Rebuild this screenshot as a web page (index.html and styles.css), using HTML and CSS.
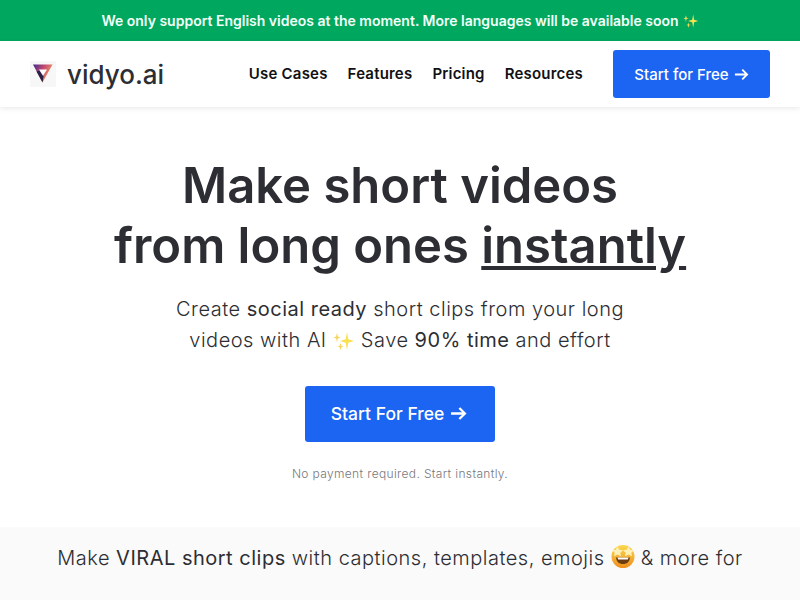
FILE: index.html
```html
<!DOCTYPE html>
<html lang="en">
<head>
    <meta charset="UTF-8">
    <meta name="viewport" content="width=device-width, initial-scale=1.0">
    <title>vidyo.ai</title>
    <link rel="stylesheet" href="styles.css">
</head>
<body>
    <div class="top-banner">
        We only support English videos at the moment. More languages will be available soon
        <svg class="sparkles sparkles-small" viewBox="0 0 22 22"><path d="M14 2 15.300 9.200 21 11 15.300 12.800 14 20 12.700 12.800 7 11 12.700 9.200Z" fill="#fbe14f"/><path d="M4 3 4.900 6.600 7.500 7.500 4.900 8.400 4 12 3.100 8.400 .5 7.500 3.100 6.600Z" fill="#f8d55a"/><path d="M7.500 13 8.300 15.700 10.500 16.500 8.300 17.300 7.500 20.500 6.700 17.300 4.500 16.500 6.700 15.700Z" fill="#f8d55a"/></svg>
    </div>

    <header class="navbar">
        <a class="brand" href="#">
            <span class="brand-icon">
                <svg viewBox="0 0 26 26" width="26" height="26">
                    <defs>
                        <linearGradient id="logoGrad" x1="0" y1="0" x2="1" y2="0.5">
                            <stop offset="0" stop-color="#3d2a8f"/>
                            <stop offset="0.5" stop-color="#c4476e"/>
                            <stop offset="1" stop-color="#f2a566"/>
                        </linearGradient>
                    </defs>
                    <path d="M3 3.500H22.500L12.500 21.500Z" fill="url(#logoGrad)"/>
                    <path d="M9 8.500H17L12.500 15.500Z" fill="#fff"/>
                    <path d="M12.500 21.500 6.500 10.500 9.500 9.500 13.500 15.500Z" fill="#2b2147"/>
                </svg>
            </span>
            <span class="brand-name">vidyo.ai</span>
        </a>
        <nav class="nav-links">
            <a href="#">Use Cases</a>
            <a href="#">Features</a>
            <a href="#">Pricing</a>
            <a href="#">Resources</a>
        </nav>
        <a class="btn btn-nav" href="#">Start for Free
            <svg class="arrow" viewBox="0 0 16 16" width="15" height="15"><path d="M1 8H14M8.800 2.800 14 8 8.800 13.200" fill="none" stroke="#fff" stroke-width="2"/></svg>
        </a>
    </header>

    <main class="hero">
        <h1>Make short videos<br>from long ones <u>instantly</u></h1>
        <p class="hero-sub">Create <span class="em">social ready</span> short clips from your long<br>videos with AI
            <svg class="sparkles" viewBox="0 0 22 22"><path d="M14 2 15.300 9.200 21 11 15.300 12.800 14 20 12.700 12.800 7 11 12.700 9.200Z" fill="#fbe14f"/><path d="M4 3 4.900 6.600 7.500 7.500 4.900 8.400 4 12 3.100 8.400 .5 7.500 3.100 6.600Z" fill="#f8d55a"/><path d="M7.500 13 8.300 15.700 10.500 16.500 8.300 17.300 7.500 20.500 6.700 17.300 4.500 16.500 6.700 15.700Z" fill="#f8d55a"/></svg>
            Save <span class="em">90% time</span> and effort</p>
        <a class="btn btn-hero" href="#">Start For Free
            <svg class="arrow" viewBox="0 0 16 16" width="17" height="17"><path d="M1 8H14M8.800 2.800 14 8 8.800 13.200" fill="none" stroke="#fff" stroke-width="2.200"/></svg>
        </a>
        <p class="hero-note">No payment required. Start instantly.</p>
    </main>

    <section class="viral-strip">
        <p>Make <span class="em">VIRAL short clips</span> with captions, templates, emojis
            <svg class="star-face" viewBox="0 0 24 24" width="24" height="24">
                <defs>
                    <linearGradient id="faceGrad" x1="0" y1="0" x2="0" y2="1">
                        <stop offset="0" stop-color="#fbd84f"/>
                        <stop offset="1" stop-color="#ee8f1c"/>
                    </linearGradient>
                </defs>
                <circle cx="12" cy="12.500" r="11.500" fill="url(#faceGrad)"/>
                <path d="M5 13.500H19C18.500 18 15.800 20 12 20S5.500 18 5 13.500Z" fill="#6b3d10"/>
                <path d="M6.500 13.500H17.500L16.800 15.500H7.200Z" fill="#fff"/>
                <path d="M6.500 2.500 8.300 5.800 12 6.300 9.300 8.800 10 12.300 6.500 10.600 3 12.300 3.700 8.800 1 6.300 4.700 5.800Z" fill="#fdf0b8"/>
                <path d="M17.500 2.500 19.300 5.800 23 6.300 20.300 8.800 21 12.300 17.500 10.600 14 12.300 14.700 8.800 12 6.300 15.700 5.800Z" fill="#fdf0b8"/>
            </svg>
            &amp; more for</p>
    </section>
</body>
</html>
```

FILE: styles.css
```css
/* Global Reset */
* {
    margin: 0;
    padding: 0;
    box-sizing: border-box;
    font-family: 'Inter', sans-serif;
}

body {
    background: #fff;
    color: #2d2e33;
    height: 600px;
    overflow: hidden;
}

a {
    text-decoration: none;
    color: inherit;
}

/* Green notice */
.top-banner {
    height: 41px;
    background: #00a85f;
    color: #f2fff8;
    font-size: 14px;
    font-weight: 600;
    display: flex;
    justify-content: center;
    align-items: center;
    gap: 4px;
}

.sparkles {
    width: 22px;
    height: 22px;
    vertical-align: -5px;
}

.sparkles-small {
    width: 16px;
    height: 16px;
}

/* Navbar */
.navbar {
    position: relative;
    height: 66px;
    display: flex;
    align-items: center;
    padding: 0 30px;
    background: #fff;
    box-shadow: 0 1px 6px rgba(0, 0, 0, 0.1);
}

.brand {
    display: flex;
    align-items: center;
    gap: 11px;
}

.brand-icon {
    width: 26px;
    height: 26px;
    background: #f8f7f7;
}

.brand-icon svg {
    display: block;
}

.brand-name {
    font-size: 26px;
    font-weight: 500;
    color: #2d2e33;
}

.nav-links {
    display: flex;
    gap: 20px;
    margin-left: auto;
    margin-right: 30px;
    margin-bottom: 2px;
    font-size: 15px;
    font-weight: 600;
    letter-spacing: 0.2px;
    color: #111114;
}

.btn {
    display: flex;
    align-items: center;
    justify-content: center;
    background: #1c64f2;
    color: #fff;
    border-radius: 3px;
    font-weight: 500;
}

.btn-nav {
    width: 157px;
    height: 48px;
    gap: 5px;
    font-size: 15px;
}

/* Hero */
.hero {
    height: 420px;
    padding-top: 49px;
    display: flex;
    flex-direction: column;
    align-items: center;
    text-align: center;
}

h1 {
    font-size: 49px;
    line-height: 60px;
    font-weight: 600;
    color: #2d2e33;
}

.hero-sub {
    margin-top: 18px;
    font-size: 20px;
    line-height: 31px;
    font-weight: 300;
    letter-spacing: 0.5px;
    color: #2d2e33;
}

.em {
    font-weight: 400;
}

.btn-hero {
    width: 190px;
    height: 56px;
    gap: 6px;
    margin-top: 30px;
    padding: 0 2px 2px 0;
    font-size: 17.500px;
}

.hero-note {
    margin-top: 24px;
    font-size: 12px;
    font-weight: 300;
    letter-spacing: 0.35px;
    color: #77777b;
}

/* Bottom strip */
.viral-strip {
    height: 73px;
    padding-top: 16px;
    background: #fafafa;
    text-align: center;
    font-size: 20px;
    font-weight: 300;
    letter-spacing: 0.5px;
    line-height: 31px;
}

.star-face {
    vertical-align: -3px;
}
```
